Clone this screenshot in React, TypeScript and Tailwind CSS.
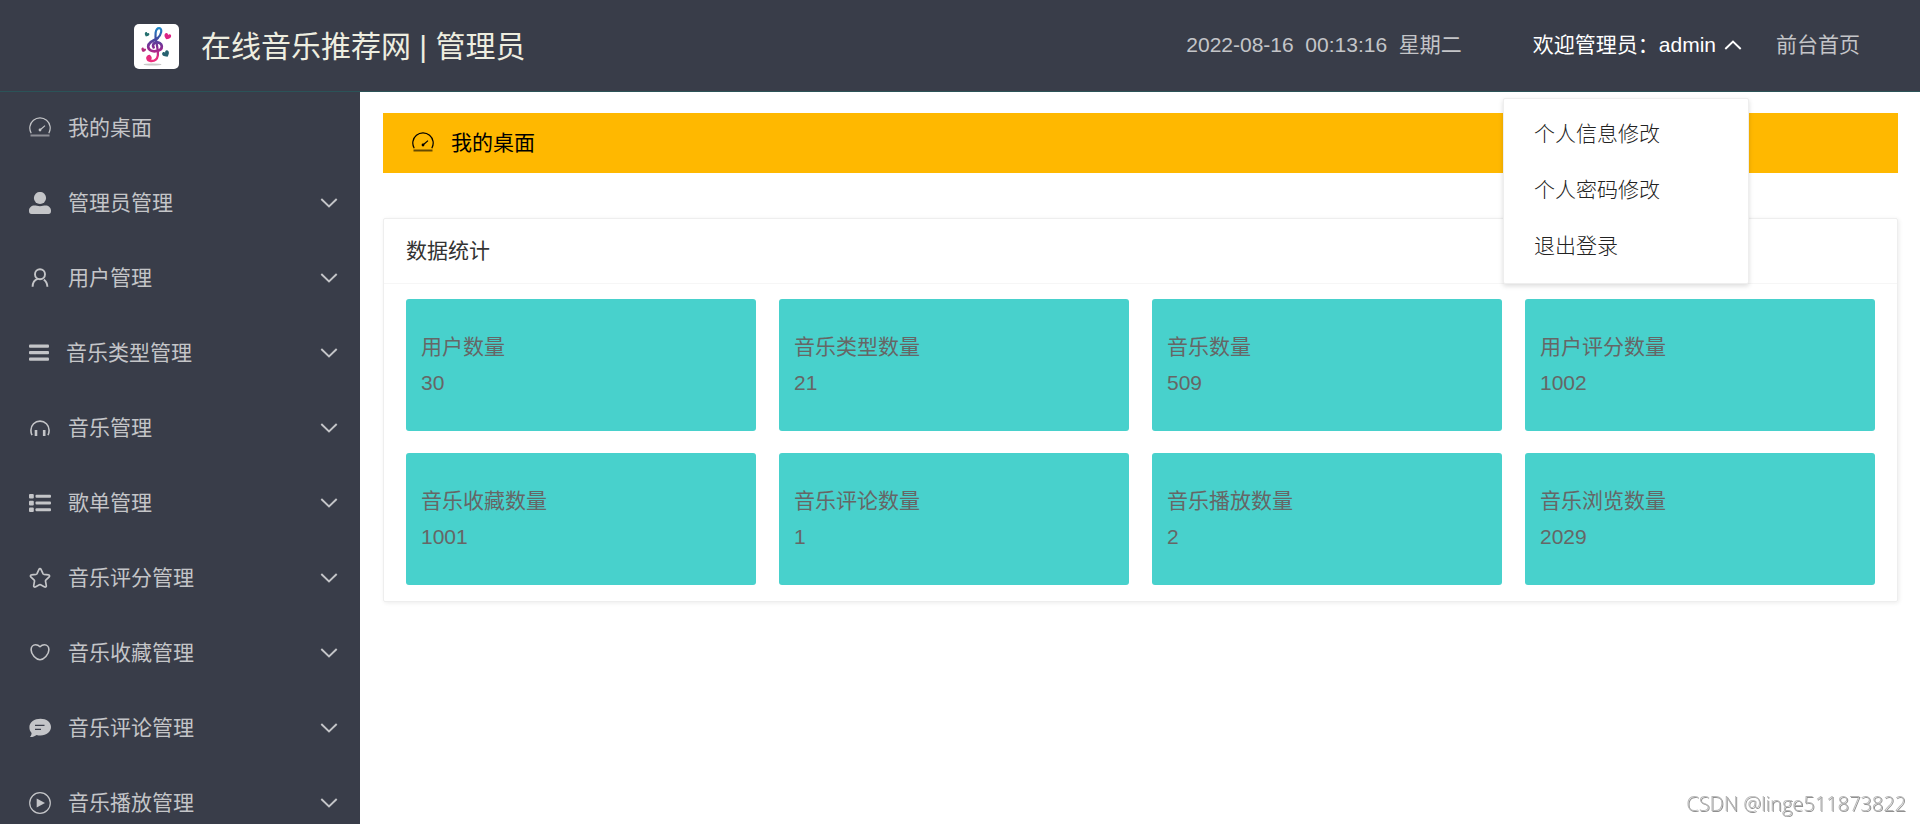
import { useState, type ReactNode } from "react";

type MenuItem = {
  label: string;
  icon: ReactNode;
  expandable?: boolean;
};

type Stat = {
  label: string;
  value: number;
};

function DashboardIcon() {
  return (
    <svg viewBox="0 0 22 22" className="size-[22px]" fill="none" stroke="currentColor">
      <path d="M2.2 16.200A10.200 10.200 0 1 1 19.800 16.200" strokeWidth="1.200" />
      <path d="M1.500 18.500h19" strokeWidth="2" opacity="0.6" />
      <path d="M11 13l5-4.400" strokeWidth="1.200" />
      <circle cx="11" cy="13" r="1.400" fill="currentColor" stroke="none" />
    </svg>
  );
}

function AdminIcon() {
  return (
    <svg viewBox="0 0 22 22" className="size-[22px]" fill="currentColor">
      <circle cx="11" cy="6" r="6.100" />
      <path d="M5.500 13.600c1.800 0 3 .7 5.500.7s3.700-.7 5.500-.7c3 0 5.500 2 5.500 5.200 0 2.200-.8 3.200-2.500 3.200h-17C.8 22 0 21 0 18.800c0-3.200 2.500-5.200 5.500-5.200z" />
    </svg>
  );
}

function UserIcon() {
  return (
    <svg viewBox="0 0 22 22" className="size-[22px]" fill="none" stroke="currentColor" strokeWidth="1.900">
      <circle cx="11" cy="7.200" r="5" />
      <path d="M3.600 19.800c0-4.500 1.800-7 5.200-8" />
      <path d="M14.800 12.600c2.200 1.400 3.400 3.800 3.600 7.200" />
    </svg>
  );
}

function BarsIcon() {
  return (
    <svg viewBox="0 0 20 22" className="h-[22px] w-[20px]" fill="currentColor">
      <rect x="0" y="2.500" width="20" height="3.200" rx="1" />
      <rect x="0" y="9" width="20" height="3.200" rx="1" />
      <rect x="0" y="15.500" width="20" height="3.200" rx="1" />
    </svg>
  );
}

function HeadphonesIcon() {
  return (
    <svg viewBox="0 0 22 22" className="size-[22px]" fill="none" stroke="currentColor">
      <path d="M3 18.200c-.9-2-1.100-3.600-1.100-5a9.100 9.100 0 0 1 18.200 0c0 1.400-.2 3-1.100 5" strokeWidth="1.600" />
      <path d="M7 13v6M15.200 13v6" strokeWidth="2.600" />
    </svg>
  );
}

function ListIcon() {
  return (
    <svg viewBox="0 0 22 22" className="size-[22px]" fill="currentColor">
      <rect x="0" y="2" width="4.800" height="4.600" rx="1" />
      <rect x="0" y="8.800" width="4.800" height="4.600" rx="1" />
      <rect x="0" y="15.500" width="4.800" height="4.600" rx="1" />
      <rect x="6.500" y="2.800" width="15.500" height="3" rx="1" />
      <rect x="6.500" y="9.600" width="15.500" height="3" rx="1" />
      <rect x="6.500" y="16.300" width="15.500" height="3" rx="1" />
    </svg>
  );
}

function StarIcon() {
  return (
    <svg viewBox="0 0 22 22" className="size-[22px]" fill="none" stroke="currentColor" strokeWidth="1.700" strokeLinejoin="round">
      <path d="M10 2.300c.4-.9 1.600-.9 2 0l2 4.300c.2.400.5.600.9.700l4.700.6c1 .1 1.300 1.200.6 1.900l-3.400 3.300c-.3.300-.4.700-.3 1.100l.8 4.500c.2 1-.8 1.700-1.600 1.200l-4.100-2.200c-.4-.2-.8-.2-1.200 0l-4.100 2.200c-.8.500-1.800-.2-1.600-1.200l.8-4.500c.1-.4 0-.8-.3-1.100L1.800 9.800c-.7-.7-.4-1.800.6-1.900l4.700-.6c.4-.1.7-.3.9-.7z" />
    </svg>
  );
}

function HeartIcon() {
  return (
    <svg viewBox="0 0 22 22" className="size-[22px]" fill="none" stroke="currentColor" strokeWidth="1.600" strokeLinejoin="round">
      <path d="M11 4.700C9.600 3.300 8 2.800 6.600 2.800c-2.700 0-4.500 2.200-4.500 5 0 4.800 5 9.900 8.900 10 3.900-.1 8.900-5.200 8.900-10 0-2.800-1.800-5-4.500-5-1.400 0-3 .5-4.400 1.900z" />
    </svg>
  );
}

function CommentIcon() {
  return (
    <svg viewBox="0 0 22 22" className="size-[22px]">
      <path
        d="M11.500 1.700C17.500 1.700 22 5.200 22 10s-4.500 8.500-10.500 8.500c-1.400 0-2.700-.2-3.900-.6-1.900 1.400-4.200 2.200-6.700 2 1-1 1.600-2.300 1.700-4C.9 14.300.4 12.300.4 10c0-4.800 5.100-8.300 11.100-8.300z"
        fill="currentColor"
      />
      <path d="M6 8.400h9.500M6 12.300h6" stroke="#393d49" strokeWidth="1.300" />
    </svg>
  );
}

function PlayIcon() {
  return (
    <svg viewBox="0 0 22 22" className="size-[22px]">
      <circle cx="11" cy="11" r="10.300" fill="none" stroke="currentColor" strokeWidth="1.200" />
      <path d="M7.700 6.400 16 11l-8.300 4.600z" fill="currentColor" />
    </svg>
  );
}

function Chevron({ up = false, className = "" }: { up?: boolean; className?: string }) {
  return (
    <svg viewBox="0 0 18 10" className={`h-[10px] w-[18px] ${className}`} fill="none" stroke="currentColor" strokeWidth="1.900">
      <path d={up ? "M1.300 9L9 1.500 16.700 9" : "M1.300 1L9 8.500 16.700 1"} />
    </svg>
  );
}

function Logo() {
  return (
    <svg viewBox="0 0 45 45" className="size-[45px] rounded-[5px] bg-white">
      <defs>
        <linearGradient id="clef" gradientUnits="userSpaceOnUse" x1="0" y1="3" x2="0" y2="38">
          <stop offset="0" stopColor="#1d8ecb" />
          <stop offset="0.3" stopColor="#3a4fa3" />
          <stop offset="0.6" stopColor="#8b2a92" />
          <stop offset="0.85" stopColor="#e02a80" />
          <stop offset="1" stopColor="#f0307c" />
        </linearGradient>
        <path id="heart" d="M0 3C-3.500 1-3.800-1-3-2.200-2-3.500-.5-3 0-1.600.5-3 2-3.500 3-2.200 3.800-1 3.500 1 0 3z" />
      </defs>
      <ellipse cx="18.500" cy="40.500" rx="9" ry="1" fill="#c9c9c9" />
      <g fill="none" stroke="url(#clef)" strokeLinecap="round">
        <path d="M22.200 18C21 12 20.800 4.200 25.200 4.200c3.600 0 2.200 7-1.800 10.200" strokeWidth="2.200" />
        <path d="M23.400 14.400C18 17 14.200 19 14.200 22.600c0 3.600 4 5 7.400 4.600 4-.4 6.400-2.200 6.200-5-.2-2.800-3.200-4.200-5.600-3.800-2.800.4-4 3.200-2.600 5" strokeWidth="2.700" />
        <path d="M22.200 17c1 6 2.200 11 1.600 14.600-.6 3.600-3.400 5.600-7 5.400-4-.2-4.600-4.600-1.400-5" strokeWidth="2.300" />
      </g>
      <circle cx="15.200" cy="34" r="2.500" fill="#e82c7d" />
      <use href="#heart" transform="translate(12.800 10.500) rotate(25) scale(.7)" fill="#26706f" />
      <use href="#heart" transform="translate(33.500 12.500) rotate(20) scale(1)" fill="#dc2586" />
      <use href="#heart" transform="translate(32 30) rotate(-30) scale(1.050)" fill="#27616f" />
      <use href="#heart" transform="translate(9.500 26) rotate(20) scale(.7)" fill="#b32b7c" />
    </svg>
  );
}

const menu: MenuItem[] = [
  { label: "我的桌面", icon: <DashboardIcon /> },
  { label: "管理员管理", icon: <AdminIcon />, expandable: true },
  { label: "用户管理", icon: <UserIcon />, expandable: true },
  { label: "音乐类型管理", icon: <BarsIcon />, expandable: true },
  { label: "音乐管理", icon: <HeadphonesIcon />, expandable: true },
  { label: "歌单管理", icon: <ListIcon />, expandable: true },
  { label: "音乐评分管理", icon: <StarIcon />, expandable: true },
  { label: "音乐收藏管理", icon: <HeartIcon />, expandable: true },
  { label: "音乐评论管理", icon: <CommentIcon />, expandable: true },
  { label: "音乐播放管理", icon: <PlayIcon />, expandable: true },
];

const stats: Stat[] = [
  { label: "用户数量", value: 30 },
  { label: "音乐类型数量", value: 21 },
  { label: "音乐数量", value: 509 },
  { label: "用户评分数量", value: 1002 },
  { label: "音乐收藏数量", value: 1001 },
  { label: "音乐评论数量", value: 1 },
  { label: "音乐播放数量", value: 2 },
  { label: "音乐浏览数量", value: 2029 },
];

const userLinks = ["个人信息修改", "个人密码修改", "退出登录"];

function Header() {
  const [open, setOpen] = useState(true);

  return (
    <header className="flex h-[92px] shrink-0 items-center justify-between border-b border-[#2b5358] bg-[#393d49] pr-[60px] pl-[134px]">
      <div className="flex items-center gap-[22px] pt-[2px]">
        <Logo />
        <h1 className="text-[30px] leading-[45px] text-[#eeeee0]">在线音乐推荐网 | 管理员</h1>
      </div>
      <div className="flex items-center pb-[2px] text-[#c4c5c8]">
        <time dateTime="2022-08-16T00:13:16" className="mr-[71px] whitespace-pre">
          {"2022-08-16  00:13:16  星期二"}
        </time>
        <div className="relative mr-[34px]">
          <button type="button" aria-expanded={open} onClick={() => setOpen(!open)} className="flex items-center gap-2 text-white">
            欢迎管理员：admin
            <Chevron up={open} />
          </button>
          {open && (
            <ul className="absolute top-full -right-[7px] z-10 mt-[38px] w-[246px] rounded-xs border border-[#eee] bg-white pt-[7px] pb-[9px] font-light text-[#222] shadow-[0_2px_5px_rgba(0,0,0,0.14)]">
              {userLinks.map((l) => (
                <li key={l}>
                  <a href="#" className="block px-[30px] leading-[56px]">{l}</a>
                </li>
              ))}
            </ul>
          )}
        </div>
        <a href="#">前台首页</a>
      </div>
    </header>
  );
}

function Sidebar() {
  return (
    <nav className="w-[360px] shrink-0 overflow-hidden bg-[#393d49] pt-px text-[#c4c5c8]">
      <ul className="flex flex-col gap-[5px]">
        {menu.map((m) => (
          <li key={m.label}>
            <a href="#" className="flex h-[70px] items-center pr-[22px] pl-[29px]">
              {m.icon}
              <span className="ml-[17px]">{m.label}</span>
              {m.expandable && <Chevron className="ml-auto" />}
            </a>
          </li>
        ))}
      </ul>
    </nav>
  );
}

export default function App() {
  return (
    <div className="flex h-screen flex-col overflow-hidden bg-white font-['Liberation_Sans','Noto_Sans_CJK_SC',sans-serif] text-[21px] leading-[30px]">
      <Header />
      <div className="flex min-h-0 flex-1">
        <Sidebar />
        <main className="min-w-0 flex-1 pt-[21px] pr-[22px] pl-[23px]">
          <div className="flex h-[60px] items-center gap-[17px] bg-[#ffb800] pl-[29px] text-black">
            <DashboardIcon />
            我的桌面
          </div>
          <section className="mt-[45px] rounded-xs border border-[#eee] shadow-[1px_1px_4px_rgba(0,0,0,0.08)]">
            <h2 className="border-b border-[#f6f6f6] px-[22px] leading-[64px] text-[#333]">数据统计</h2>
            <div className="grid grid-cols-4 gap-x-[23px] gap-y-[22px] px-[22px] pt-[15px] pb-4">
              {stats.map((s) => (
                <div key={s.label} className="rounded-[3px] bg-[#48d1cc] px-[15px] py-[30px] leading-[36px] text-[#666]">
                  <h3>{s.label}</h3>
                  <p>{s.value}</p>
                </div>
              ))}
            </div>
          </section>
        </main>
      </div>
      <div className="fixed right-[14px] bottom-[5px] font-['Open_Sans',sans-serif] text-[20px] font-light text-[#b8b8b8] [text-shadow:1px_1px_0_#909090]">
        CSDN @linge511873822
      </div>
    </div>
  );
}
